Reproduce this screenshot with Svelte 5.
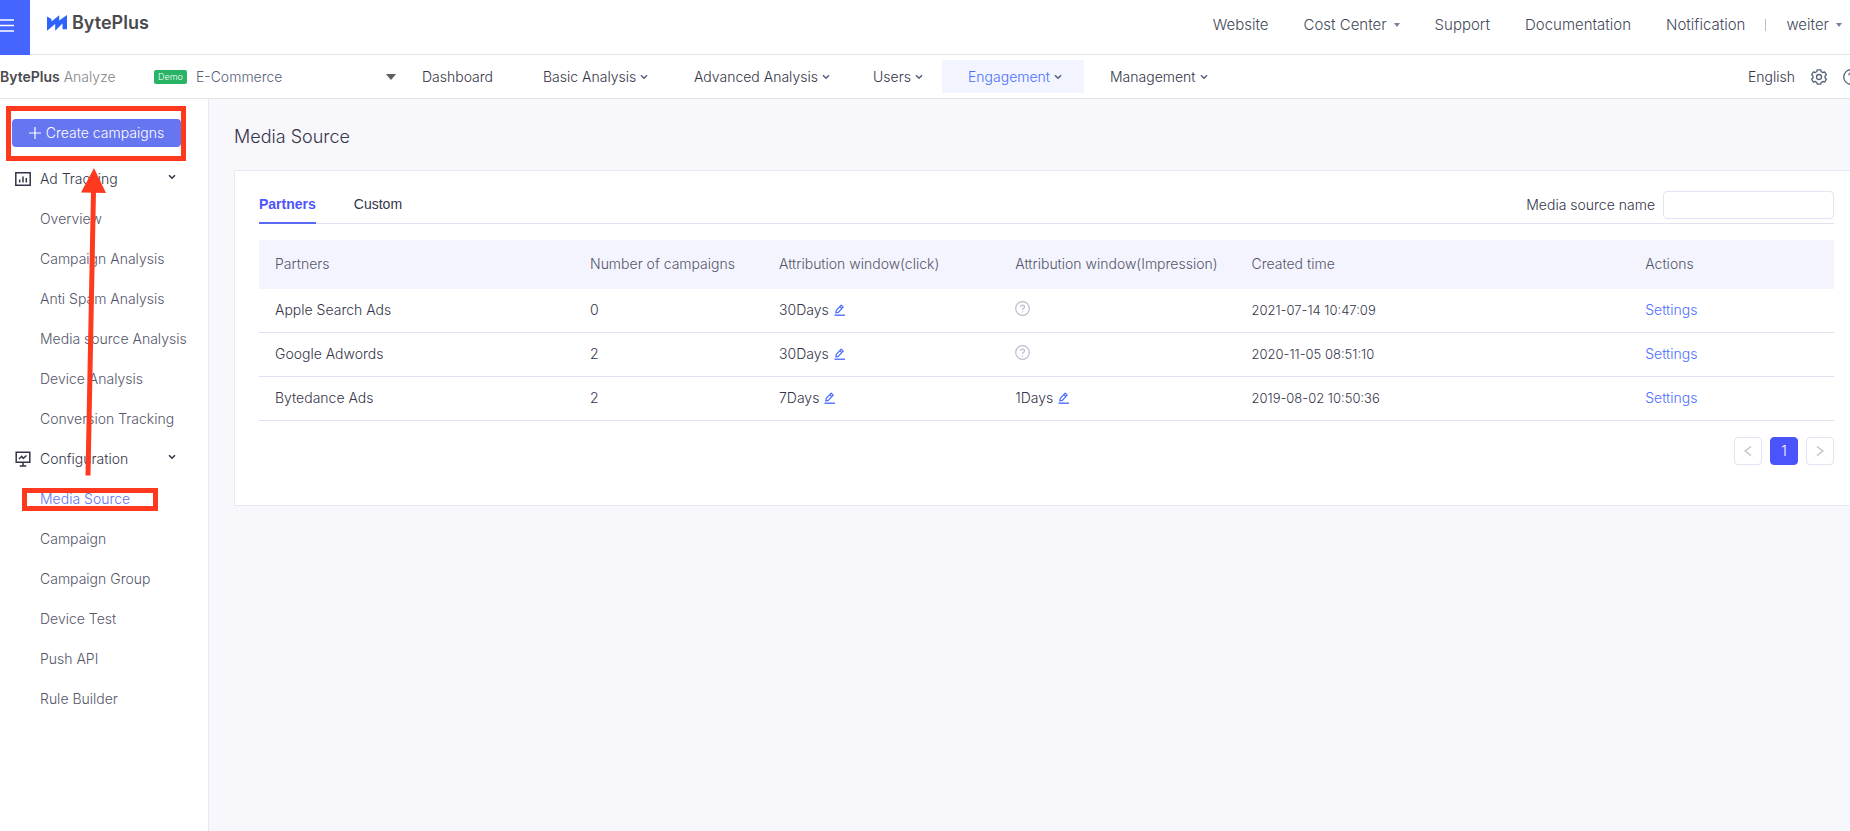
<script>
  const links = [
    { label: 'Website' },
    { label: 'Cost Center', caret: true },
    { label: 'Support' },
    { label: 'Documentation' },
    { label: 'Notification' },
  ];

  const menus = [
    { label: 'Dashboard' },
    { label: 'Basic Analysis', caret: true },
    { label: 'Advanced Analysis', caret: true },
    { label: 'Users', caret: true },
    { label: 'Engagement', caret: true },
    { label: 'Management', caret: true },
  ];

  const tracking = [
    'Overview',
    'Campaign Analysis',
    'Anti Spam Analysis',
    'Media source Analysis',
    'Device Analysis',
    'Conversion Tracking',
  ];

  const configuration = [
    'Media Source',
    'Campaign',
    'Campaign Group',
    'Device Test',
    'Push API',
    'Rule Builder',
  ];

  const columns = [
    'Partners',
    'Number of campaigns',
    'Attribution window(click)',
    'Attribution window(Impression)',
    'Created time',
    'Actions',
  ];

  const rows = [
    { name: 'Apple Search Ads', campaigns: 0, click: '30Days', impression: '', created: '2021-07-14 10:47:09' },
    { name: 'Google Adwords', campaigns: 2, click: '30Days', impression: '', created: '2020-11-05 08:51:10' },
    { name: 'Bytedance Ads', campaigns: 2, click: '7Days', impression: '1Days', created: '2019-08-02 10:50:36' },
  ];

  let activeMenu = $state('Engagement');
  let activePage = $state('Media Source');
  let activeTab = $state('Partners');
  let search = $state('');

  const visibleRows = $derived(
    rows.filter((row) => row.name.toLowerCase().includes(search.toLowerCase()))
  );
</script>

{#snippet chevron()}
  <svg class="chevron" width="8" height="8" viewBox="0 0 8 8" aria-hidden="true">
    <path d="M1 2.2 4 5.2 7 2.2" fill="none" stroke="currentColor" stroke-width="1.6" />
  </svg>
{/snippet}

{#snippet caret()}
  <svg width="6" height="4" viewBox="0 0 6 4" aria-hidden="true">
    <path d="M0 0H6L3 4Z" fill="#76809c" />
  </svg>
{/snippet}

{#snippet edit()}
  <button class="edit" aria-label="Edit">
    <svg width="11" height="12" viewBox="0 0 11 12" aria-hidden="true">
      <path d="M1.8 9 2.3 6.3 7.2 1.2 9.2 3.2 4.3 8.3ZM5.8 2.7 7.8 4.7" fill="none" stroke="#4465fe" stroke-width="1.2" stroke-linejoin="round" />
      <path d="M0.5 11.2H11" stroke="#4465fe" stroke-width="1.3" />
    </svg>
  </button>
{/snippet}

<header class="topbar">
  <button class="menu" aria-label="Menu">
    <svg width="14" height="13" viewBox="0 0 14 13" aria-hidden="true">
      <path d="M0 1H14M0 6.5H14M0 12H14" stroke="#fff" stroke-width="1.3" />
    </svg>
  </button>
  <a class="logo" href="#home">
    <svg width="20" height="16" viewBox="0 0 20 16" aria-hidden="true">
      <path d="M0 1.5 4.5 4V6.5L12.2 0.3V5.5L20 0V14.3H15.5V8.5L8.2 15.7V9L0 15.7Z" fill="#2d63fb" />
    </svg>
    <span>BytePlus</span>
  </a>
  <nav class="links">
    {#each links as link}
      <a href="#top">{link.label}{#if link.caret}{@render caret()}{/if}</a>
    {/each}
    <span class="divider"></span>
    <button class="user">weiter{@render caret()}</button>
  </nav>
</header>

<div class="subbar">
  <div class="product"><b>BytePlus</b> Analyze</div>
  <div class="project">
    <span class="badge">Demo</span>
    <select aria-label="Project">
      <option>E-Commerce</option>
    </select>
    <svg width="10" height="6" viewBox="0 0 10 6" aria-hidden="true">
      <path d="M0 0H10L5 6Z" fill="#5d5d5d" />
    </svg>
  </div>
  <nav class="menus">
    {#each menus as menu}
      <button class:active={menu.label === activeMenu} onclick={() => (activeMenu = menu.label)}>
        {menu.label}{#if menu.caret}{@render chevron()}{/if}
      </button>
    {/each}
  </nav>
  <div class="tools">
    <button>English</button>
    <button aria-label="Preferences">
      <svg width="16" height="16" viewBox="0 0 16 16" fill="none" stroke="#56617a" stroke-width="1.3" stroke-linejoin="round" aria-hidden="true">
        <path d="M6.3 0.8H9.7L10.3 2.7 11.7 3.5 13.7 3 15.3 5.7 14 7.2V8.8L15.3 10.3 13.7 13 11.7 12.5 10.3 13.3 9.7 15.2H6.3L5.7 13.3 4.3 12.5 2.3 13 0.7 10.3 2 8.8V7.2L0.7 5.7 2.3 3 4.3 3.5 5.7 2.7Z" />
        <circle cx="8" cy="8" r="2.5" />
      </svg>
    </button>
    <button class="help" aria-label="Help">
      <svg width="16" height="16" viewBox="0 0 16 16" fill="none" stroke="#56617a" stroke-width="1.3" aria-hidden="true">
        <circle cx="8" cy="8" r="7.3" />
        <path d="M5.8 6.2C5.8 3.4 10.2 3.4 10.2 6.2 10.2 7.8 8 7.7 8 9.6M8 11V12.3" />
      </svg>
    </button>
  </div>
</div>

<div class="layout">
  <aside>
    <button class="create">
      <svg width="12" height="12" viewBox="0 0 12 12" aria-hidden="true">
        <path d="M6 0V12M0 6H12" stroke="#fff" stroke-width="1.2" />
      </svg>
      Create campaigns
    </button>

    <button class="group">
      <svg width="16" height="14" viewBox="0 0 16 14" fill="none" stroke="#343548" stroke-width="1.5" aria-hidden="true">
        <path d="M0.8 0.8H15.2V13.2H0.8ZM4.7 7.5V10.5M8 4.5V10.5M11.3 6V10.5" />
      </svg>
      <span>Ad Tracking</span>
      {@render chevron()}
    </button>
    {#each tracking as item}
      <a href="#page" class:active={item === activePage} onclick={() => (activePage = item)}>{item}</a>
    {/each}

    <button class="group">
      <svg width="16" height="16" viewBox="0 0 16 16" fill="none" stroke="#343548" stroke-width="1.5" aria-hidden="true">
        <path d="M1.2 1.3H14.8V11.2H1.2ZM8 11V15M4.7 15H11.3M4 8 6.7 5.3 8.3 7.3 11.5 4.5" />
      </svg>
      <span>Configuration</span>
      {@render chevron()}
    </button>
    {#each configuration as item}
      <a href="#page" class:active={item === activePage} onclick={() => (activePage = item)}>{item}</a>
    {/each}

    <!-- walkthrough marks over the menu -->
    <svg class="marks" width="208" height="420" viewBox="0 0 208 420" fill="none" stroke="#ff391e" stroke-width="5" aria-hidden="true">
      <path d="M8.5 9.5H183.5V59.5H8.5Z" />
      <path d="M24.5 391.5H155.5V409.5H24.5Z" />
      <path d="M93.5 92 88 376.5" />
      <path d="M94 69 106 94 81 93.5Z" fill="#ff391e" stroke="none" />
    </svg>
  </aside>

  <main>
    <h1>Media Source</h1>
    <section class="card">
      <div class="tabs">
        {#each ['Partners', 'Custom'] as tab}
          <button class:active={tab === activeTab} onclick={() => (activeTab = tab)}>{tab}</button>
        {/each}
        <div class="search">
          <label for="source-name">Media source name</label>
          <input id="source-name" type="text" bind:value={search} />
        </div>
      </div>

      <table>
        <thead>
          <tr>
            {#each columns as column}
              <th>{column}</th>
            {/each}
          </tr>
        </thead>
        <tbody>
          {#each visibleRows as row}
            <tr>
              <td>{row.name}</td>
              <td>{row.campaigns}</td>
              <td>{row.click}{@render edit()}</td>
              <td>
                {#if row.impression}
                  {row.impression}{@render edit()}
                {:else}
                  <svg class="hint" width="15" height="15" viewBox="0 0 15 15" fill="none" stroke="#bdbccd" stroke-width="1.2" aria-hidden="true">
                    <circle cx="7.5" cy="7.5" r="6.8" />
                    <path d="M5.5 6C5.5 3.5 9.5 3.5 9.5 6 9.5 7.3 7.5 7.3 7.5 9M7.5 10.2V11.5" />
                  </svg>
                {/if}
              </td>
              <td class="created">{row.created}</td>
              <td><a href="#settings">Settings</a></td>
            </tr>
          {/each}
        </tbody>
      </table>

      <div class="pager">
        <button aria-label="Previous page">
          <svg width="8" height="10" viewBox="0 0 8 10" aria-hidden="true">
            <path d="M7 0.5 1 5 7 9.5" fill="none" stroke="#bfbfbf" stroke-width="1.2" />
          </svg>
        </button>
        <button class="current">1</button>
        <button aria-label="Next page">
          <svg width="8" height="10" viewBox="0 0 8 10" aria-hidden="true">
            <path d="M1 0.5 7 5 1 9.5" fill="none" stroke="#bfbfbf" stroke-width="1.2" />
          </svg>
        </button>
      </div>
    </section>
  </main>
</div>

<style>
  :global(body) {
    margin: 0;
    background: #f7f7fc;
    font-family: Inter, 'Liberation Sans', sans-serif;
    font-size: 14px;
    font-weight: 300;
    line-height: 20px;
    color: #343548;
  }

  :global(#app) {
    display: flex;
    flex-direction: column;
    min-height: 100vh;
  }

  button,
  select,
  input {
    padding: 0;
    border: none;
    background: none;
    font: inherit;
    color: inherit;
  }

  button {
    cursor: pointer;
  }

  a {
    color: inherit;
    text-decoration: none;
  }

  svg {
    display: block;
    flex: none;
  }

  .topbar {
    display: flex;
    height: 54px;
    background: #fff;
    border-bottom: 1px solid #e5e5e8;
  }

  .menu {
    width: 30px;
    height: 55px;
    padding-bottom: 5px;
    background: #4465fe;
  }

  .logo {
    display: flex;
    gap: 5px;
    height: 46px;
    align-items: center;
    margin-left: 17px;
    font-size: 18px;
    font-weight: 600;
    color: #4a4a4e;
  }

  .links {
    display: flex;
    align-items: center;
    gap: 35px;
    height: 50px;
    margin-left: auto;
    padding-right: 8px;
    font-size: 15px;
    color: #434a5a;
  }

  .links a,
  .user {
    display: flex;
    align-items: center;
    gap: 7px;
  }

  .divider {
    width: 1px;
    height: 12px;
    margin: 0 -15px;
    background: #b9bdc9;
  }

  .subbar {
    display: flex;
    align-items: center;
    height: 43px;
    background: #fff;
    border-bottom: 1px solid #e5e5e8;
  }

  .product {
    width: 154px;
    color: #85858a;
  }

  .product b {
    font-weight: 600;
    color: #4a4a4e;
  }

  .project {
    display: flex;
    align-items: center;
    width: 242px;
  }

  .project select {
    flex: 1;
    margin-left: 9px;
    appearance: none;
    color: #56617a;
  }

  .badge {
    width: 33px;
    border-radius: 2px;
    background: #29b364;
    font-size: 9px;
    line-height: 14px;
    text-align: center;
    color: #fff;
  }

  .menus {
    display: grid;
    grid-template-columns: 121px 151px 179px 95px 142px auto;
  }

  .menus button {
    display: flex;
    align-items: center;
    gap: 4px;
    height: 33px;
    padding-left: 26px;
    white-space: nowrap;
  }

  .menus .chevron {
    color: #56617a;
  }

  .menus .active {
    background: #f2f5ff;
    color: #4c6fff;
  }

  .tools {
    display: flex;
    align-items: center;
    gap: 16px;
    margin-left: auto;
  }

  .help {
    width: 7px;
    overflow: hidden;
  }

  .layout {
    display: flex;
    flex: 1;
  }

  aside {
    position: relative;
    display: flex;
    flex: none;
    flex-direction: column;
    width: 208px;
    padding-top: 20px;
    background: #fff;
    border-right: 1px solid #e8e8f4;
  }

  .create {
    display: flex;
    align-items: center;
    justify-content: center;
    gap: 5px;
    height: 28px;
    margin: 0 27px 12px 12px;
    border-radius: 4px;
    background: #6675f0;
    color: #fff;
  }

  aside a {
    padding-left: 40px;
    line-height: 40px;
    color: #55566a;
  }

  aside .active {
    color: #6675f0;
  }

  .group {
    display: flex;
    align-items: center;
    gap: 9px;
    height: 40px;
    padding: 0 32px 0 15px;
  }

  .group .chevron {
    margin: 0 0 4px auto;
  }

  .marks {
    position: absolute;
    top: 0;
    left: 0;
    pointer-events: none;
  }

  main {
    flex: 1;
    padding: 26px 0 0 25px;
  }

  h1 {
    margin: 0 0 21px;
    font-size: 18px;
    font-weight: 300;
    line-height: 24px;
  }

  .card {
    padding: 20px 16px 40px 24px;
    background: #fff;
    border: 1px solid #e8e8f4;
    border-right: none;
  }

  .tabs {
    display: flex;
    gap: 38px;
    height: 32px;
    border-bottom: 1px solid #e0e0ee;
    font-family: 'Liberation Sans', sans-serif;
    font-weight: 400;
  }

  .tabs button {
    height: 33px;
    padding-bottom: 6px;
    border-bottom: 2px solid transparent;
    box-sizing: border-box;
  }

  .tabs .active {
    border-color: #5b6af2;
    font-weight: 700;
    color: #4b54fa;
  }

  .search {
    display: flex;
    align-items: center;
    gap: 8px;
    height: 28px;
    margin-left: auto;
    font-family: Inter, sans-serif;
    font-weight: 300;
  }

  .search input {
    width: 171px;
    height: 28px;
    padding: 0 8px;
    border: 1px solid #e3e3f3;
    border-radius: 4px;
    box-sizing: border-box;
  }

  table {
    width: 100%;
    margin-top: 16px;
    table-layout: fixed;
    border-collapse: separate;
    border-spacing: 0;
  }

  th,
  td {
    height: 44px;
    padding: 0 0 2px 16px;
    border-bottom: 1px solid #e0e0ee;
    box-sizing: border-box;
    text-align: left;
  }

  th {
    height: 49px;
    border: none;
    background: #f3f4fe;
    font-weight: 300;
    color: #55566a;
    white-space: nowrap;
  }

  th:nth-child(1) {
    width: 20%;
  }

  th:nth-child(2) {
    width: 12%;
  }

  th:nth-child(3),
  th:nth-child(4) {
    width: 15%;
  }

  th:nth-child(5) {
    width: 25%;
  }

  th:nth-child(6) {
    width: 13%;
  }

  td a {
    color: #4c6fff;
  }

  .created {
    font-size: 13px;
  }

  .hint {
    margin-bottom: 2px;
  }

  .edit {
    display: inline-block;
    margin-left: 5px;
    vertical-align: -1px;
  }

  .pager {
    display: flex;
    justify-content: flex-end;
    gap: 8px;
    margin-top: 16px;
  }

  .pager button {
    display: flex;
    align-items: center;
    justify-content: center;
    width: 28px;
    height: 28px;
    border: 1px solid #e3e3f3;
    border-radius: 4px;
  }

  .pager .current {
    border-color: #4b54fa;
    background: #4b54fa;
    color: #fff;
  }
</style>
